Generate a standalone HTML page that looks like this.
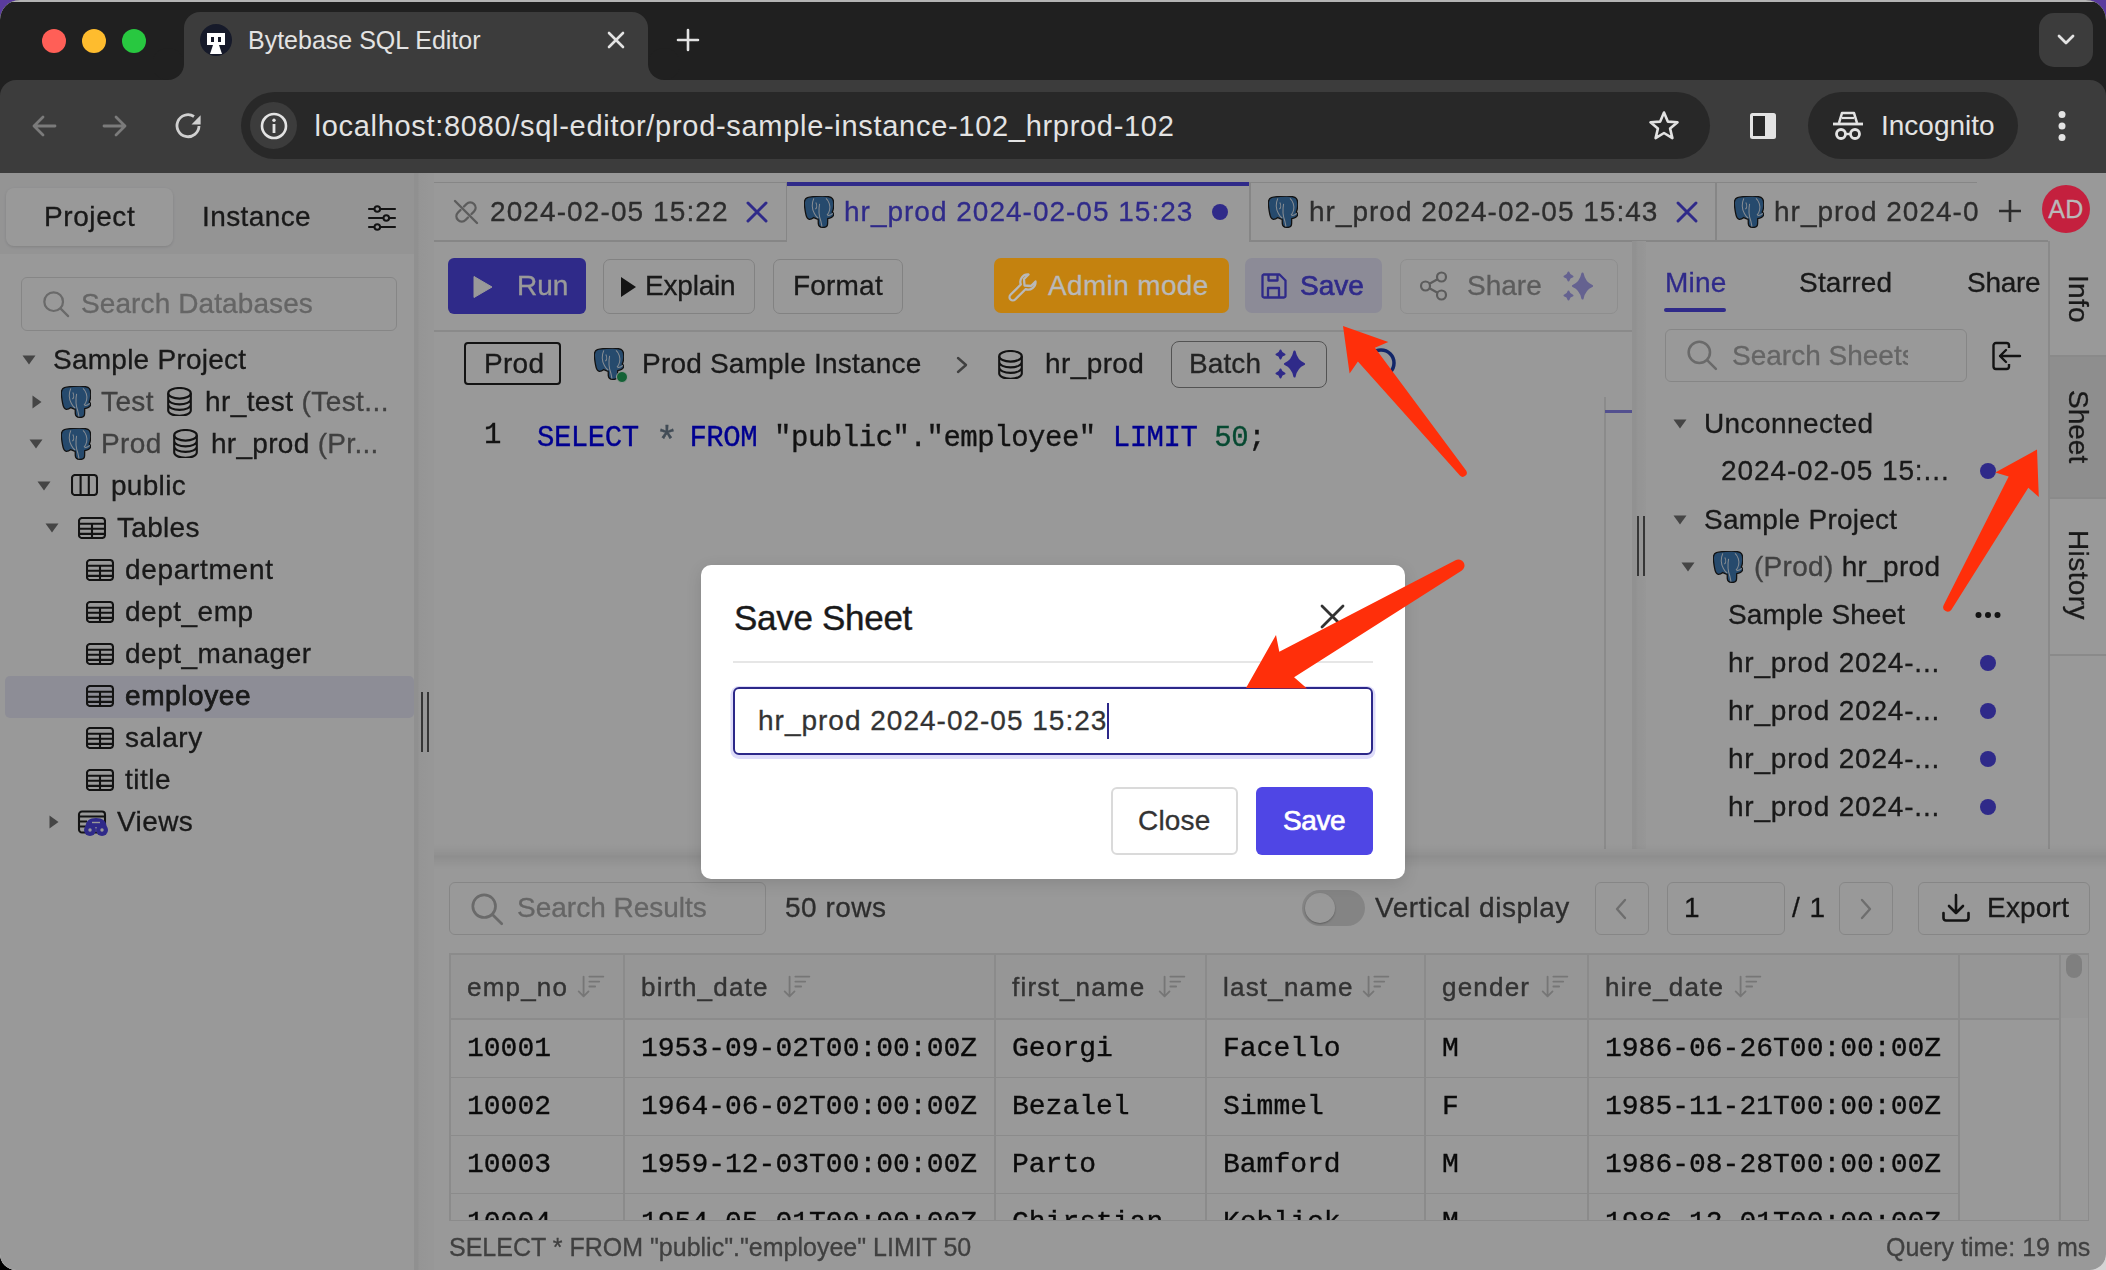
<!DOCTYPE html>
<html><head><meta charset="utf-8">
<style>
html,body{margin:0;padding:0}
body{width:2106px;height:1270px;overflow:hidden;position:relative;background:#000;font-family:"Liberation Sans",sans-serif}
.a{position:absolute}
.t{position:absolute;white-space:nowrap;line-height:28px;font-size:28px;color:#2a2a2a;-webkit-text-stroke:0.3px}
.m{font-family:"Liberation Mono",monospace;-webkit-text-stroke:0.35px currentColor}
svg{position:absolute;overflow:visible}
</style></head><body>
<!-- outside corners -->
<div class="a" style="left:0;top:0;width:1053px;height:300px;background:#5a3b9e"></div>
<div class="a" style="left:1053px;top:0;width:1053px;height:300px;background:#5a3b9e"></div>
<div class="a" style="left:1053px;top:900px;width:1053px;height:370px;background:#d4d4d4"></div>
<div id="win" class="a" style="left:0;top:0;width:2106px;height:1270px;border-radius:20px 20px 16px 16px;overflow:hidden;background:#fff">

<!-- ===== CHROME ===== -->
<div id="chrome">
<div class="a" style="left:0;top:0;width:2106px;height:173px;background:#202020"></div>
<div class="a" style="left:0;top:80px;width:2106px;height:93px;background:#3c3c3c;border-radius:16px 16px 0 0"></div>
<!-- active tab -->
<div class="a" style="left:184px;top:12px;width:464px;height:70px;background:#3c3c3c;border-radius:16px 16px 0 0"></div>
<div class="a" style="left:168px;top:64px;width:16px;height:16px;background:#3c3c3c"></div>
<div class="a" style="left:152px;top:48px;width:32px;height:32px;background:#202020;border-radius:50%"></div>
<div class="a" style="left:648px;top:64px;width:16px;height:16px;background:#3c3c3c"></div>
<div class="a" style="left:648px;top:48px;width:32px;height:32px;background:#202020;border-radius:50%"></div>
<!-- traffic lights -->
<div class="a" style="left:42px;top:29px;width:24px;height:24px;border-radius:50%;background:#ff5f57"></div>
<div class="a" style="left:82px;top:29px;width:24px;height:24px;border-radius:50%;background:#febc2e"></div>
<div class="a" style="left:122px;top:29px;width:24px;height:24px;border-radius:50%;background:#28c840"></div>
<!-- favicon -->
<div class="a" style="left:200px;top:24px;width:32px;height:32px;border-radius:50%;background:#161a2a"></div>
<svg style="left:200px;top:24px" width="32" height="32" viewBox="0 0 32 32">
<path d="M7 9h18v12h-6l3 9h-12l3-9h-6z" fill="#fff"/>
<rect x="11" y="13" width="3" height="5" fill="#161a2a"/><rect x="18" y="13" width="3" height="5" fill="#161a2a"/>
</svg>
<div class="t" style="left:248px;top:26px;font-size:25px;color:#e3e3e3;-webkit-text-stroke:0">Bytebase SQL Editor</div>
<svg style="left:606px;top:30px" width="20" height="20" viewBox="0 0 20 20"><path d="M3 3L17 17M17 3L3 17" stroke="#e3e3e3" stroke-width="2.6" stroke-linecap="round"/></svg>
<svg style="left:676px;top:28px" width="24" height="24" viewBox="0 0 24 24"><path d="M12 2V22M2 12H22" stroke="#e3e3e3" stroke-width="2.6" stroke-linecap="round"/></svg>
<!-- dropdown -->
<div class="a" style="left:2039px;top:13px;width:54px;height:54px;border-radius:15px;background:#3c3c3c"></div>
<svg style="left:2056px;top:32px" width="20" height="14" viewBox="0 0 20 14"><path d="M3 4L10 11L17 4" stroke="#e3e3e3" stroke-width="2.8" fill="none" stroke-linecap="round" stroke-linejoin="round"/></svg>
<!-- nav -->
<svg style="left:30px;top:112px" width="28" height="28" viewBox="0 0 28 28"><path d="M25 14H4M13 5L4 14L13 23" stroke="#7b7b7b" stroke-width="2.8" fill="none" stroke-linecap="round" stroke-linejoin="round"/></svg>
<svg style="left:101px;top:112px" width="28" height="28" viewBox="0 0 28 28"><path d="M3 14H24M15 5L24 14L15 23" stroke="#7b7b7b" stroke-width="2.8" fill="none" stroke-linecap="round" stroke-linejoin="round"/></svg>
<svg style="left:174px;top:112px" width="28" height="28" viewBox="0 0 28 28"><path d="M20 4.5A11 11 0 1 0 25 14" stroke="#d0d0d0" stroke-width="2.8" fill="none"/><path d="M17.5 12.6H26.6V3.2Z" fill="#d0d0d0"/></svg>
<!-- url bar -->
<div class="a" style="left:241px;top:92px;width:1469px;height:67px;border-radius:34px;background:#282828"></div>
<div class="a" style="left:250px;top:102px;width:47px;height:47px;border-radius:50%;background:#3c3c3c"></div>
<svg style="left:259px;top:111px" width="30" height="30" viewBox="0 0 30 30"><circle cx="15" cy="15" r="12" stroke="#e3e3e3" stroke-width="2.6" fill="none"/><rect x="13.6" y="13" width="2.8" height="9" fill="#e3e3e3"/><circle cx="15" cy="9.2" r="1.7" fill="#e3e3e3"/></svg>
<div class="t" style="left:314.5px;top:111px;font-size:29px;line-height:30px;color:#e3e3e3;letter-spacing:0.7px;-webkit-text-stroke:0">localhost:8080/sql-editor/prod-sample-instance-102_hrprod-102</div>
<svg style="left:1647px;top:109px" width="34" height="34" viewBox="0 0 34 34"><path d="M17 3.5L20.8 12.6L30.5 13.3L23.1 19.6L25.4 29.1L17 24L8.6 29.1L10.9 19.6L3.5 13.3L13.2 12.6Z" stroke="#e3e3e3" stroke-width="2.6" fill="none" stroke-linejoin="round"/></svg>
<svg style="left:1748px;top:111px" width="30" height="30" viewBox="0 0 30 30"><rect x="2" y="2" width="26" height="26" rx="2.5" fill="#e3e3e3"/><rect x="5" y="5" width="12" height="20" fill="#282828"/></svg>
<!-- incognito -->
<div class="a" style="left:1808px;top:92px;width:210px;height:67px;border-radius:34px;background:#282828"></div>
<svg style="left:1831px;top:109px" width="34" height="34" viewBox="0 0 34 34"><path d="M8 14L11 4H23L26 14" fill="none" stroke="#e3e3e3" stroke-width="2.6" stroke-linejoin="round"/><path d="M11 9H23" stroke="#e3e3e3" stroke-width="2.2"/><path d="M2 15H32" stroke="#e3e3e3" stroke-width="2.8"/><circle cx="10" cy="25" r="4.5" fill="none" stroke="#e3e3e3" stroke-width="2.8"/><circle cx="24" cy="25" r="4.5" fill="none" stroke="#e3e3e3" stroke-width="2.8"/><path d="M14.5 25H19.5" stroke="#e3e3e3" stroke-width="2.4"/></svg>
<div class="t" style="left:1881px;top:112px;color:#e3e3e3;-webkit-text-stroke:0">Incognito</div>
<svg style="left:2052px;top:108px" width="20" height="36" viewBox="0 0 20 36"><circle cx="10" cy="6.5" r="3.5" fill="#e3e3e3"/><circle cx="10" cy="18" r="3.5" fill="#e3e3e3"/><circle cx="10" cy="29.5" r="3.5" fill="#e3e3e3"/></svg>
<div class="a" style="left:0;top:0;width:2106px;height:1.5px;background:#b4b4b4"></div>
</div>

<!-- ===== APP ===== -->
<div id="app" class="a" style="left:0;top:0;width:2106px;height:1270px;filter:brightness(0.6)">
<div class="a" style="left:0;top:173px;width:2106px;height:1097px;background:#fff"></div>
<svg width="0" height="0" style="position:absolute">
<defs>
<symbol id="pg" viewBox="0 0 30 32"><path d="M3.4 1.6C7 0.4 18 0 21.7 0.3C25 0.5 27.4 1.2 28.4 2.6C29.8 4.5 30 8.5 29.4 12.3C29.1 14 28.6 15.4 28.2 16.1C29.4 17 30 18 29.6 19.1C29 20.6 26.8 22.2 23.7 22.7L23.6 27.8C23.5 30.2 21.8 31.4 19.5 31.4C16.5 31.4 14.5 30.2 14.3 27.6L14.2 23.4C12.6 22.7 11 22 9.8 21.6C8.5 22.6 6.8 23.4 5.2 23.3C3.6 23.1 2.2 21 1.5 16.7C0.8 12.5 0.1 8 0.4 5.8C0.7 3.8 1.8 2.2 3.4 1.6Z" fill="#3f7bb5" stroke="#1e1e1e" stroke-width="1.3"/><path d="M9.8 2.4C7.8 7 7.9 13 10.4 17.5C11.4 19.5 12.6 21 14.2 22M22 2.4C25 5 26.6 10 25.6 14C25.1 16.4 24.1 18 23 19M15.6 7.8C14.6 13 15 20 16.8 25L18 30.6M11.8 6.5C13.2 9 12.8 12 11.4 13.2M23.6 19.6C25.6 19.6 27.6 18.6 28.8 17.4" fill="none" stroke="#dfe8f2" stroke-width="1.05"/></symbol>
<symbol id="db" viewBox="0 0 25 29"><ellipse cx="12.5" cy="6.3" rx="11.3" ry="5.3" fill="none" stroke="currentColor" stroke-width="2.1"/><path d="M1.2 6.3V23.5C1.2 26.4 6.3 28.8 12.5 28.8S23.8 26.4 23.8 23.5V6.3M1.2 12.1C1.2 15 6.3 17.4 12.5 17.4S23.8 15 23.8 12.1M1.2 17.6C1.2 20.5 6.3 22.9 12.5 22.9S23.8 20.5 23.8 17.6" fill="none" stroke="currentColor" stroke-width="2.1"/></symbol>
<symbol id="tbl" viewBox="0 0 28 22"><rect x="1" y="1" width="26" height="20" rx="3" fill="none" stroke="currentColor" stroke-width="2.1"/><path d="M1 6.7H27M1 11.8H27M1 16.9H27M14 6.7V21" stroke="currentColor" stroke-width="2.1"/></symbol>
<symbol id="sch" viewBox="0 0 27 22"><rect x="1" y="1" width="25" height="20" rx="3" fill="none" stroke="currentColor" stroke-width="2.1"/><path d="M9.6 1V21M17.8 1V21" stroke="currentColor" stroke-width="2.1"/></symbol>
<symbol id="tri" viewBox="0 0 14 10"><path d="M0.5 0.5H13.5L7 9.5Z" fill="currentColor"/></symbol>
<symbol id="trr" viewBox="0 0 10 14"><path d="M0.5 0.5V13.5L9.5 7Z" fill="currentColor"/></symbol>
<symbol id="spark" viewBox="0 0 32 32"><g fill="currentColor" stroke="currentColor" stroke-linejoin="round"><path d="M20.5 3.5C21.8 10 24 13.5 30 16C24 18.5 21.8 22 20.5 28.5C19.2 22 17 18.5 11 16C17 13.5 19.2 10 20.5 3.5Z" stroke-width="2.2"/><path d="M6.5 2.5C7 5 8 6 10.5 6.5C8 7 7 8 6.5 10.5C6 8 5 7 2.5 6.5C5 6 6 5 6.5 2.5Z" stroke-width="2"/><path d="M6.5 21.5C7 24 8 25 10.5 25.5C8 26 7 27 6.5 29.5C6 27 5 26 2.5 25.5C5 25 6 24 6.5 21.5Z" stroke-width="2"/></g></symbol>
<symbol id="srch" viewBox="0 0 30 30"><circle cx="12.5" cy="12.5" r="10" fill="none" stroke="currentColor" stroke-width="2.4"/><path d="M20 20L28 28" stroke="currentColor" stroke-width="2.4" stroke-linecap="round"/></symbol>
<symbol id="sort" viewBox="0 0 34 30"><path d="M8 3V27M2 21L8 27L14 21" fill="none" stroke="currentColor" stroke-width="2.2" stroke-linecap="round" stroke-linejoin="round"/><path d="M15 3H32M15 9H27M15 15H22" stroke="currentColor" stroke-width="2.2" stroke-linecap="round"/></symbol>
</defs></svg>

<!-- ===== SIDEBAR ===== -->
<div class="a" style="left:0;top:173px;width:414px;height:1097px;background:#fff"></div>
<div class="a" style="left:0;top:173px;width:414px;height:81px;background:#f6f6f7"></div>
<div class="a" style="left:6px;top:188px;width:167px;height:58px;border-radius:8px;background:#fff;box-shadow:0 1px 3px rgba(0,0,0,.12)"></div>
<div class="t" style="left:44px;top:203px;letter-spacing:0.6px">Project</div>
<div class="t" style="left:202px;top:203px;letter-spacing:0.4px">Instance</div>
<svg style="left:366px;top:203px" width="30" height="30" viewBox="0 0 30 30"><path d="M3 6H29M3 15H29M3 24H29" stroke="#1f1f1f" stroke-width="2.1" stroke-linecap="round"/><circle cx="11.3" cy="6" r="2.8" fill="#f6f6f7" stroke="#1f1f1f" stroke-width="2"/><circle cx="20.3" cy="15" r="2.8" fill="#f6f6f7" stroke="#1f1f1f" stroke-width="2"/><circle cx="11.3" cy="24" r="2.8" fill="#f6f6f7" stroke="#1f1f1f" stroke-width="2"/></svg>
<div class="a" style="left:21px;top:277px;width:374px;height:52px;border:1.5px solid #e0e0e0;border-radius:6px"></div>
<svg style="left:42px;top:290px;color:#b0b0b0" width="28" height="28"><use href="#srch"/></svg>
<div class="t" style="left:81px;top:290px;color:#a8a8a8;letter-spacing:0.1px">Search Databases</div>
<!-- tree -->
<svg style="left:22px;top:355px;color:#737373" width="14" height="10"><use href="#tri"/></svg>
<div class="t" style="left:53px;top:346px;letter-spacing:0.25px">Sample Project</div>
<svg style="left:32px;top:395px;color:#737373" width="10" height="14"><use href="#trr"/></svg>
<svg style="left:61px;top:386px" width="30" height="32"><use href="#pg"/></svg>
<div class="t" style="left:101px;top:388px;color:#6b6b6b;letter-spacing:0.4px">Test</div>
<svg style="left:167px;top:387px;color:#1f1f1f" width="25" height="29"><use href="#db"/></svg>
<div class="t" style="left:205px;top:388px;letter-spacing:0.4px">hr_test <span style="color:#6b6b6b">(Test...</span></div>
<svg style="left:29px;top:439px;color:#737373" width="14" height="10"><use href="#tri"/></svg>
<svg style="left:61px;top:428px" width="30" height="32"><use href="#pg"/></svg>
<div class="t" style="left:101px;top:430px;color:#6b6b6b;letter-spacing:0.4px">Prod</div>
<svg style="left:173px;top:429px;color:#1f1f1f" width="25" height="29"><use href="#db"/></svg>
<div class="t" style="left:211px;top:430px;letter-spacing:0.3px">hr_prod <span style="color:#6b6b6b">(Pr...</span></div>
<svg style="left:37px;top:481px;color:#737373" width="14" height="10"><use href="#tri"/></svg>
<svg style="left:71px;top:474px;color:#1f1f1f" width="27" height="22"><use href="#sch"/></svg>
<div class="t" style="left:111px;top:472px;letter-spacing:0.3px">public</div>
<svg style="left:45px;top:523px;color:#737373" width="14" height="10"><use href="#tri"/></svg>
<svg style="left:78px;top:517px;color:#1f1f1f" width="28" height="22"><use href="#tbl"/></svg>
<div class="t" style="left:117px;top:514px;letter-spacing:0.3px">Tables</div>
<div class="a" style="left:5px;top:676px;width:409px;height:42px;border-radius:5px;background:#ebebfa"></div>
<svg style="left:86px;top:559px;color:#1f1f1f" width="28" height="22"><use href="#tbl"/></svg>
<div class="t" style="left:125px;top:556px;letter-spacing:0.7px">department</div>
<svg style="left:86px;top:601px;color:#1f1f1f" width="28" height="22"><use href="#tbl"/></svg>
<div class="t" style="left:125px;top:598px;letter-spacing:0.5px">dept_emp</div>
<svg style="left:86px;top:643px;color:#1f1f1f" width="28" height="22"><use href="#tbl"/></svg>
<div class="t" style="left:125px;top:640px;letter-spacing:0.5px">dept_manager</div>
<svg style="left:86px;top:685px;color:#1f1f1f" width="28" height="22"><use href="#tbl"/></svg>
<div class="t" style="left:125px;top:682px;letter-spacing:0.6px;-webkit-text-stroke:0.75px">employee</div>
<svg style="left:86px;top:727px;color:#1f1f1f" width="28" height="22"><use href="#tbl"/></svg>
<div class="t" style="left:125px;top:724px;letter-spacing:0.5px">salary</div>
<svg style="left:86px;top:769px;color:#1f1f1f" width="28" height="22"><use href="#tbl"/></svg>
<div class="t" style="left:125px;top:766px;letter-spacing:0.5px">title</div>
<svg style="left:49px;top:815px;color:#737373" width="10" height="14"><use href="#trr"/></svg>
<svg style="left:77px;top:810px" width="32" height="28" viewBox="0 0 32 28"><rect x="2" y="1.5" width="26" height="21" rx="3" fill="none" stroke="#1f1f1f" stroke-width="2.1"/><path d="M2 6.5H28M2 11.5H10M2 16.5H10" stroke="#1f1f1f" stroke-width="2"/><path d="M8.5 17C8.5 11 12.5 8 19 8C25.5 8 29.5 11 29.5 17Z" fill="#4f46e5"/><circle cx="13" cy="20" r="6" fill="#4f46e5"/><circle cx="25" cy="20" r="6" fill="#4f46e5"/><circle cx="13" cy="20" r="1.7" fill="#fff"/><circle cx="25" cy="20" r="1.7" fill="#fff"/><path d="M15 12.5H23" stroke="#fff" stroke-width="1.4"/></svg>

<div class="t" style="left:117px;top:808px;letter-spacing:0.4px">Views</div>
<!-- splitter -->
<div class="a" style="left:414px;top:173px;width:20px;height:1097px;background:linear-gradient(to right,#f0f0f0 0,#f0f0f0 4px,#f9f9f9 5px,#fcfcfc 20px)"></div>
<div class="a" style="left:421px;top:692px;width:2px;height:60px;background:#5a5a5a"></div>
<div class="a" style="left:427px;top:692px;width:2px;height:60px;background:#5a5a5a"></div>

<!-- ===== MAIN TABS ===== -->
<div class="a" style="left:434px;top:182px;width:1543px;height:1px;background:#e0e0e0"></div>
<div class="a" style="left:434px;top:240px;width:1614px;height:1.5px;background:#e0e0e0"></div>
<div class="a" style="left:786px;top:183px;width:1.5px;height:58px;background:#e0e0e0"></div>
<div class="a" style="left:1249px;top:183px;width:1.5px;height:58px;background:#e0e0e0"></div>
<div class="a" style="left:1715px;top:183px;width:1.5px;height:58px;background:#e0e0e0"></div>
<!-- tab1 -->
<svg style="left:451px;top:197px" width="30" height="30" viewBox="0 0 30 30"><path d="M13 9.5L15.5 7A5.3 5.3 0 0 1 23 14.5L20.5 17M17 20.5L14.5 23A5.3 5.3 0 0 1 7 15.5L9.5 13" fill="none" stroke="#9a9a9a" stroke-width="2.4" stroke-linecap="round"/><path d="M4 4L26 26" stroke="#9a9a9a" stroke-width="2.4" stroke-linecap="round"/></svg>
<div class="t" style="left:490px;top:198px;color:#4b4b4b;letter-spacing:1.1px">2024-02-05 15:22</div>
<svg style="left:746px;top:201px" width="22" height="22" viewBox="0 0 22 22"><path d="M2 2L20 20M20 2L2 20" stroke="#4f46e5" stroke-width="3" stroke-linecap="round"/></svg>
<!-- tab2 active -->
<div class="a" style="left:787px;top:182px;width:462px;height:60px;background:#fff"></div>
<div class="a" style="left:787px;top:182px;width:462px;height:3.5px;background:#4f46e5"></div>
<svg style="left:804px;top:196px" width="30" height="32"><use href="#pg"/></svg>
<div class="t" style="left:844px;top:198px;color:#4f46e5;letter-spacing:1px">hr_prod 2024-02-05 15:23</div>
<div class="a" style="left:1212px;top:204px;width:16px;height:16px;border-radius:50%;background:#4f46e5"></div>
<!-- tab3 -->
<svg style="left:1268px;top:196px" width="30" height="32"><use href="#pg"/></svg>
<div class="t" style="left:1309px;top:198px;color:#4b4b4b;letter-spacing:1px">hr_prod 2024-02-05 15:43</div>
<svg style="left:1676px;top:201px" width="22" height="22" viewBox="0 0 22 22"><path d="M2 2L20 20M20 2L2 20" stroke="#4f46e5" stroke-width="3" stroke-linecap="round"/></svg>
<!-- tab4 -->
<svg style="left:1734px;top:196px" width="30" height="32"><use href="#pg"/></svg>
<div class="a" style="left:1774px;top:190px;width:205px;height:44px;overflow:hidden"><div class="t" style="left:0;top:8px;color:#4b4b4b;letter-spacing:1px">hr_prod 2024-02-05 15:52</div></div>
<svg style="left:1998px;top:199px" width="24" height="24" viewBox="0 0 24 24"><path d="M12 1V23M1 12H23" stroke="#4b4b4b" stroke-width="2.6"/></svg>



<!-- ===== TOOLBAR ===== -->
<div class="a" style="left:448px;top:258px;width:138px;height:56px;border-radius:6px;background:#4f46e5"></div>
<svg style="left:472px;top:275px" width="22" height="24" viewBox="0 0 22 24"><path d="M2 1.5V22.5L20 12Z" fill="#fff" stroke="#fff" stroke-width="1" stroke-linejoin="round"/></svg>
<div class="t" style="left:517px;top:272px;color:#fff">Run</div>
<div class="a" style="left:603px;top:259px;width:150px;height:53px;border:1.5px solid #d8d8d8;border-radius:7px"></div>
<svg style="left:620px;top:276px" width="18" height="22" viewBox="0 0 18 22"><path d="M1 1V21L16 11Z" fill="#1f1f1f"/></svg>
<div class="t" style="left:645px;top:272px;letter-spacing:-0.2px">Explain</div>
<div class="a" style="left:773px;top:259px;width:128px;height:53px;border:1.5px solid #d8d8d8;border-radius:7px"></div>
<div class="t" style="left:793px;top:272px;letter-spacing:0.2px">Format</div>



<div class="a" style="left:1245px;top:258px;width:137px;height:55px;border-radius:7px;background:#e9e8fb"></div>
<svg style="left:1259px;top:271px" width="30" height="30" viewBox="0 0 30 30"><path d="M4.5 3.5H20.5L26.5 9.5V25A1.5 1.5 0 0 1 25 26.5H5A1.5 1.5 0 0 1 3.5 25V5A1.5 1.5 0 0 1 4.5 3.5Z" fill="none" stroke="#4f46e5" stroke-width="2.3" stroke-linejoin="round"/><path d="M9.5 3.5V9.5H18.5V3.5M9 26.5V17H20V26.5" fill="none" stroke="#4f46e5" stroke-width="2.3" stroke-linejoin="round"/></svg>
<div class="t" style="left:1300px;top:272px;color:#4f46e5;-webkit-text-stroke:0.7px #4f46e5;letter-spacing:0px">Save</div>
<div class="a" style="left:1400px;top:259px;width:216px;height:53px;border:1.5px solid #ececec;border-radius:7px"></div>
<svg style="left:1418px;top:270px" width="32" height="32" viewBox="0 0 32 32"><circle cx="23.5" cy="7" r="4.5" fill="none" stroke="#9a9a9a" stroke-width="2.2"/><circle cx="7.5" cy="16" r="4.5" fill="none" stroke="#9a9a9a" stroke-width="2.2"/><circle cx="23.5" cy="25" r="4.5" fill="none" stroke="#9a9a9a" stroke-width="2.2"/><path d="M11.5 13.8L19.5 9.2M11.5 18.2L19.5 22.8" stroke="#9a9a9a" stroke-width="2.2"/></svg>
<div class="t" style="left:1467px;top:272px;color:#9a9a9a">Share</div>
<svg style="left:1562px;top:270px;color:#a8a4f0" width="32" height="32"><use href="#spark"/></svg>
<div class="a" style="left:434px;top:330px;width:1198px;height:1.5px;background:#e6e6e6"></div>

<!-- ===== BREADCRUMB ===== -->
<div class="a" style="left:464px;top:342px;width:93px;height:39px;border:2px solid #1f1f1f;border-radius:4px"></div>
<div class="t" style="left:484px;top:350px;letter-spacing:0.3px">Prod</div>
<svg style="left:594px;top:348px" width="30" height="32"><use href="#pg"/></svg>
<div class="a" style="left:616px;top:371px;width:10px;height:10px;border-radius:50%;background:#22a35a;border:1.5px solid #fff"></div>
<div class="t" style="left:642px;top:350px;letter-spacing:0.2px">Prod Sample Instance</div>
<svg style="left:955px;top:356px" width="14" height="18" viewBox="0 0 14 18"><path d="M3 2L11 9L3 16" fill="none" stroke="#6b6b6b" stroke-width="2.4" stroke-linecap="round" stroke-linejoin="round"/></svg>
<svg style="left:998px;top:350px;color:#1f1f1f" width="25" height="29"><use href="#db"/></svg>
<div class="t" style="left:1045px;top:350px;letter-spacing:0.4px">hr_prod</div>
<div class="a" style="left:1171px;top:341px;width:154px;height:45px;border:1.5px solid #8a8a8a;border-radius:8px"></div>
<div class="t" style="left:1189px;top:350px;color:#3b3b3b;letter-spacing:0.1px">Batch</div>
<svg style="left:1274px;top:348px;color:#4f46e5" width="32" height="32"><use href="#spark"/></svg>
<svg style="left:1365px;top:347px" width="32" height="32" viewBox="0 0 32 32"><circle cx="16" cy="16" r="13" fill="none" stroke="#1e40af" stroke-width="3.5"/></svg>

<!-- ===== EDITOR ===== -->
<div class="t m" style="left:484px;top:422px;font-size:29px;color:#1f1f1f">1</div>
<div class="t m" style="left:537px;top:422px;font-size:29px;letter-spacing:-0.47px;color:#1f1f1f"><span style="color:#0000f0">SELECT</span> <span style="color:#6e7f90;display:inline-block;width:16.93px;font-size:38px;position:relative;top:7px;text-align:center">*</span> <span style="color:#0000f0">FROM</span> "public"."employee" <span style="color:#0000f0">LIMIT</span> <span style="color:#0b7a52">50</span>;</div>
<div class="a" style="left:1604px;top:397px;width:1.5px;height:452px;background:#e8e8e8"></div>
<div class="a" style="left:1605px;top:410px;width:27px;height:3px;background:#8b85ee"></div>
<div class="a" style="left:1632px;top:241px;width:14px;height:608px;background:linear-gradient(to right,#f2f2f2 0,#f2f2f2 4px,#f7f7f7 5px,#fbfbfb 14px)"></div>
<div class="a" style="left:1637px;top:516px;width:2px;height:60px;background:#5a5a5a"></div><div class="a" style="left:1643px;top:516px;width:2px;height:60px;background:#5a5a5a"></div>

<!-- ===== RIGHT PANEL ===== -->
<div class="t" style="left:1665px;top:269px;color:#4f46e5;letter-spacing:0.2px">Mine</div>
<div class="a" style="left:1664px;top:307.5px;width:62px;height:4px;border-radius:2px;background:#4f46e5"></div>
<div class="t" style="left:1799px;top:269px;letter-spacing:0.2px">Starred</div>
<div class="t" style="left:1967px;top:269px;letter-spacing:-0.3px">Share</div>
<div class="a" style="left:1665px;top:329px;width:300px;height:51px;border:1.5px solid #e0e0e0;border-radius:6px"></div>
<svg style="left:1686px;top:339px;color:#b0b0b0" width="32" height="32" viewBox="0 0 30 30"><use href="#srch"/></svg>
<div class="a" style="left:1732px;top:335px;width:176px;height:42px;overflow:hidden"><div class="t" style="left:0;top:7px;color:#a8a8a8">Search Sheets</div></div>
<svg style="left:1990px;top:340px" width="32" height="32" viewBox="0 0 32 32"><path d="M19 8V5.5A2.5 2.5 0 0 0 16.5 3H6A2.5 2.5 0 0 0 3.5 5.5V26.5A2.5 2.5 0 0 0 6 29H16.5A2.5 2.5 0 0 0 19 26.5V24" fill="none" stroke="#1f1f1f" stroke-width="2.4"/><path d="M30 16H10M16 10L10 16L16 22" fill="none" stroke="#1f1f1f" stroke-width="2.4" stroke-linecap="round" stroke-linejoin="round"/></svg>
<svg style="left:1673px;top:419px;color:#737373" width="14" height="10"><use href="#tri"/></svg>
<div class="t" style="left:1704px;top:410px;letter-spacing:0.4px">Unconnected</div>
<div class="t" style="left:1721px;top:457px;letter-spacing:0.9px">2024-02-05 15:...</div>
<div class="a" style="left:1980px;top:463px;width:16px;height:16px;border-radius:50%;background:#4f46e5"></div>
<svg style="left:1673px;top:515px;color:#737373" width="14" height="10"><use href="#tri"/></svg>
<div class="t" style="left:1704px;top:506px;letter-spacing:0.25px">Sample Project</div>
<svg style="left:1681px;top:562px;color:#737373" width="14" height="10"><use href="#tri"/></svg>
<svg style="left:1713px;top:551px" width="30" height="32"><use href="#pg"/></svg>
<div class="t" style="left:1754px;top:553px;letter-spacing:0.3px"><span style="color:#6b6b6b">(Prod)</span> hr_prod</div>
<div class="t" style="left:1728px;top:601px;letter-spacing:0.1px">Sample Sheet</div>
<svg style="left:1975px;top:610px" width="26" height="10" viewBox="0 0 26 10"><circle cx="3.5" cy="5" r="3" fill="#1f1f1f"/><circle cx="13" cy="5" r="3" fill="#1f1f1f"/><circle cx="22.5" cy="5" r="3" fill="#1f1f1f"/></svg>
<div class="t" style="left:1728px;top:649px;letter-spacing:0.8px">hr_prod 2024-...</div>
<div class="a" style="left:1980px;top:655px;width:16px;height:16px;border-radius:50%;background:#4f46e5"></div>
<div class="t" style="left:1728px;top:697px;letter-spacing:0.8px">hr_prod 2024-...</div>
<div class="a" style="left:1980px;top:703px;width:16px;height:16px;border-radius:50%;background:#4f46e5"></div>
<div class="t" style="left:1728px;top:745px;letter-spacing:0.8px">hr_prod 2024-...</div>
<div class="a" style="left:1980px;top:751px;width:16px;height:16px;border-radius:50%;background:#4f46e5"></div>
<div class="t" style="left:1728px;top:793px;letter-spacing:0.8px">hr_prod 2024-...</div>
<div class="a" style="left:1980px;top:799px;width:16px;height:16px;border-radius:50%;background:#4f46e5"></div>
<!-- vertical tabs -->
<div class="a" style="left:2048px;top:241px;width:1.5px;height:608px;background:#e6e6e6"></div>
<div class="a" style="left:2049.5px;top:355px;width:57px;height:142px;background:#ededed"></div>
<div class="a" style="left:2049.5px;top:355px;width:57px;height:1.5px;background:#e6e6e6"></div>
<div class="a" style="left:2049.5px;top:497px;width:57px;height:1.5px;background:#e6e6e6"></div>
<div class="a" style="left:2049.5px;top:654px;width:57px;height:1.5px;background:#e6e6e6"></div>
<div class="t" style="left:2063px;top:284px;transform:rotate(90deg);transform-origin:0 0;left:2092px;top:275px;letter-spacing:0.3px">Info</div>
<div class="t" style="transform:rotate(90deg);transform-origin:0 0;left:2092px;top:390px;letter-spacing:0px">Sheet</div>
<div class="t" style="transform:rotate(90deg);transform-origin:0 0;left:2092px;top:530px;letter-spacing:0.4px">History</div>

<!-- ===== RESULTS ===== -->
<div class="a" style="left:434px;top:844px;width:1672px;height:25px;background:linear-gradient(to bottom,rgba(0,0,0,0) 0,rgba(0,0,0,.035) 30%,rgba(0,0,0,.07) 50%,rgba(0,0,0,.035) 75%,rgba(0,0,0,0) 100%)"></div>
<div class="a" style="left:449px;top:882px;width:317px;height:53px;border:1.5px solid #e0e0e0;border-radius:6px;box-sizing:border-box"></div>
<svg style="left:470px;top:892px;color:#b0b0b0" width="34" height="34" viewBox="0 0 30 30"><use href="#srch"/></svg>
<div class="t" style="left:517px;top:894px;color:#a8a8a8">Search Results</div>
<div class="t" style="left:785px;top:894px;color:#4b4b4b;letter-spacing:0.5px">50 rows</div>
<div class="a" style="left:1302px;top:890px;width:63px;height:36px;border-radius:18px;background:#dcdcdc"></div>
<div class="a" style="left:1305px;top:893px;width:30px;height:30px;border-radius:50%;background:#fff;box-shadow:0 1px 2px rgba(0,0,0,.3)"></div>
<div class="t" style="left:1375px;top:894px;color:#4b4b4b;letter-spacing:0.5px">Vertical display</div>
<div class="a" style="left:1595px;top:882px;width:54px;height:53px;border:1.5px solid #e0e0e0;border-radius:6px;box-sizing:border-box"></div>
<svg style="left:1612px;top:898px" width="18" height="22" viewBox="0 0 18 22"><path d="M13 2L5 11L13 20" fill="none" stroke="#b8b8b8" stroke-width="2.4" stroke-linecap="round" stroke-linejoin="round"/></svg>
<div class="a" style="left:1667px;top:882px;width:118px;height:53px;border:1.5px solid #e0e0e0;border-radius:6px;box-sizing:border-box"></div>
<div class="t" style="left:1684px;top:894px;color:#1f1f1f">1</div>
<div class="t" style="left:1792px;top:894px;color:#1f1f1f;letter-spacing:1px">/ 1</div>
<div class="a" style="left:1839px;top:882px;width:54px;height:53px;border:1.5px solid #e0e0e0;border-radius:6px;box-sizing:border-box"></div>
<svg style="left:1857px;top:898px" width="18" height="22" viewBox="0 0 18 22"><path d="M5 2L13 11L5 20" fill="none" stroke="#b8b8b8" stroke-width="2.4" stroke-linecap="round" stroke-linejoin="round"/></svg>
<div class="a" style="left:1918px;top:882px;width:172px;height:53px;border:1.5px solid #e0e0e0;border-radius:6px;box-sizing:border-box"></div>
<svg style="left:1940px;top:892px" width="32" height="32" viewBox="0 0 32 32"><path d="M16 3V21M9 14L16 21L23 14" fill="none" stroke="#1f1f1f" stroke-width="2.6" stroke-linecap="round" stroke-linejoin="round"/><path d="M3.5 21V26A2.5 2.5 0 0 0 6 28.5H26A2.5 2.5 0 0 0 28.5 26V21" fill="none" stroke="#1f1f1f" stroke-width="2.6" stroke-linecap="round"/></svg>
<div class="t" style="left:1987px;top:894px;letter-spacing:0.2px">Export</div>
<div class="a" style="left:449px;top:953px;width:1640px;height:268px;overflow:hidden">
<div class="a" style="left:0;top:0;width:1640px;height:65px;background:#fafafa"></div>
<div class="a" style="left:0;top:0;width:1640px;height:1.5px;background:#e8e8e8"></div>
<div class="a" style="left:0;top:65px;width:1610px;height:1.5px;background:#e8e8e8"></div>
<div class="a" style="left:0;top:123.5px;width:1509px;height:1.5px;background:#e8e8e8"></div>
<div class="a" style="left:0;top:181.5px;width:1509px;height:1.5px;background:#e8e8e8"></div>
<div class="a" style="left:0;top:239.5px;width:1509px;height:1.5px;background:#e8e8e8"></div>
<div class="a" style="left:0px;top:0;width:1.5px;height:268px;background:#e8e8e8"></div>
<div class="a" style="left:174px;top:0;width:1.5px;height:268px;background:#e8e8e8"></div>
<div class="a" style="left:545px;top:0;width:1.5px;height:268px;background:#e8e8e8"></div>
<div class="a" style="left:756px;top:0;width:1.5px;height:268px;background:#e8e8e8"></div>
<div class="a" style="left:975px;top:0;width:1.5px;height:268px;background:#e8e8e8"></div>
<div class="a" style="left:1138px;top:0;width:1.5px;height:268px;background:#e8e8e8"></div>
<div class="a" style="left:1509px;top:0;width:1.5px;height:268px;background:#e8e8e8"></div>
<div class="a" style="left:1610px;top:0;width:1.5px;height:268px;background:#e8e8e8"></div>
<div class="a" style="left:1638.5px;top:0;width:1.5px;height:268px;background:#e8e8e8"></div>
<div class="t" style="left:18px;top:20px;font-size:26px;line-height:28px;color:#555;letter-spacing:0.6px;-webkit-text-stroke:0.4px #555;letter-spacing:1.2px">emp_no</div>
<svg style="left:128px;top:21px;color:#c4c4c4" width="28" height="25" viewBox="0 0 34 30"><use href="#sort"/></svg>
<div class="t" style="left:192px;top:20px;font-size:26px;line-height:28px;color:#555;letter-spacing:0.6px;-webkit-text-stroke:0.4px #555;letter-spacing:1.2px">birth_date</div>
<svg style="left:334px;top:21px;color:#c4c4c4" width="28" height="25" viewBox="0 0 34 30"><use href="#sort"/></svg>
<div class="t" style="left:563px;top:20px;font-size:26px;line-height:28px;color:#555;letter-spacing:0.6px;-webkit-text-stroke:0.4px #555;letter-spacing:1.2px">first_name</div>
<svg style="left:709px;top:21px;color:#c4c4c4" width="28" height="25" viewBox="0 0 34 30"><use href="#sort"/></svg>
<div class="t" style="left:774px;top:20px;font-size:26px;line-height:28px;color:#555;letter-spacing:0.6px;-webkit-text-stroke:0.4px #555;letter-spacing:1.2px">last_name</div>
<svg style="left:913px;top:21px;color:#c4c4c4" width="28" height="25" viewBox="0 0 34 30"><use href="#sort"/></svg>
<div class="t" style="left:993px;top:20px;font-size:26px;line-height:28px;color:#555;letter-spacing:0.6px;-webkit-text-stroke:0.4px #555;letter-spacing:1.2px">gender</div>
<svg style="left:1092px;top:21px;color:#c4c4c4" width="28" height="25" viewBox="0 0 34 30"><use href="#sort"/></svg>
<div class="t" style="left:1156px;top:20px;font-size:26px;line-height:28px;color:#555;letter-spacing:0.6px;-webkit-text-stroke:0.4px #555;letter-spacing:1.2px">hire_date</div>
<svg style="left:1285px;top:21px;color:#c4c4c4" width="28" height="25" viewBox="0 0 34 30"><use href="#sort"/></svg>
<div class="t m" style="left:18px;top:82px;color:#111">10001</div>
<div class="t m" style="left:192px;top:82px;color:#111">1953-09-02T00:00:00Z</div>
<div class="t m" style="left:563px;top:82px;color:#111">Georgi</div>
<div class="t m" style="left:774px;top:82px;color:#111">Facello</div>
<div class="t m" style="left:993px;top:82px;color:#111">M</div>
<div class="t m" style="left:1156px;top:82px;color:#111">1986-06-26T00:00:00Z</div>
<div class="t m" style="left:18px;top:140px;color:#111">10002</div>
<div class="t m" style="left:192px;top:140px;color:#111">1964-06-02T00:00:00Z</div>
<div class="t m" style="left:563px;top:140px;color:#111">Bezalel</div>
<div class="t m" style="left:774px;top:140px;color:#111">Simmel</div>
<div class="t m" style="left:993px;top:140px;color:#111">F</div>
<div class="t m" style="left:1156px;top:140px;color:#111">1985-11-21T00:00:00Z</div>
<div class="t m" style="left:18px;top:198px;color:#111">10003</div>
<div class="t m" style="left:192px;top:198px;color:#111">1959-12-03T00:00:00Z</div>
<div class="t m" style="left:563px;top:198px;color:#111">Parto</div>
<div class="t m" style="left:774px;top:198px;color:#111">Bamford</div>
<div class="t m" style="left:993px;top:198px;color:#111">M</div>
<div class="t m" style="left:1156px;top:198px;color:#111">1986-08-28T00:00:00Z</div>
<div class="t m" style="left:18px;top:256px;color:#111">10004</div>
<div class="t m" style="left:192px;top:256px;color:#111">1954-05-01T00:00:00Z</div>
<div class="t m" style="left:563px;top:256px;color:#111">Chirstian</div>
<div class="t m" style="left:774px;top:256px;color:#111">Koblick</div>
<div class="t m" style="left:993px;top:256px;color:#111">M</div>
<div class="t m" style="left:1156px;top:256px;color:#111">1986-12-01T00:00:00Z</div>
<div class="a" style="left:1617px;top:1px;width:15.5px;height:24px;border-radius:8px;background:#d4d4d4"></div>
</div>
<div class="a" style="left:434px;top:1221px;width:1672px;height:49px;background:#fff"></div>
<div class="a" style="left:449px;top:1219.5px;width:1640px;height:1.5px;background:#e8e8e8"></div>
<div class="t" style="left:449px;top:1233px;font-size:25px;color:#6a6a6a;letter-spacing:0px">SELECT * FROM "public"."employee" LIMIT 50</div>
<div class="t" style="left:1886px;top:1233px;font-size:25px;color:#6a6a6a;letter-spacing:0px">Query time: 19 ms</div>


</div>

<!-- overlay -->


<!-- saturated elements above dim -->
<div class="a" style="left:994px;top:258px;width:235px;height:55px;border-radius:7px;background:#c4820f"></div>
<svg style="left:1006px;top:270px" width="34" height="34" viewBox="0 0 34 34"><path d="M22.5 4.5A7.5 7.5 0 0 0 14.8 14.5L4.5 24.8A3.2 3.2 0 0 0 9.2 29.5L19.5 19.2A7.5 7.5 0 0 0 29.5 11.5L25 16L18.5 15.5L18 9L22.5 4.5Z" fill="none" stroke="#b9b9b9" stroke-width="2.3" stroke-linejoin="round"/></svg>
<div class="t" style="left:1048px;top:272px;color:#b9b9b9;letter-spacing:0.35px">Admin mode</div>
<div class="a" style="left:2042px;top:185px;width:48px;height:48px;border-radius:50%;background:#c4203e"></div>
<div class="t" style="left:2042px;top:195px;width:48px;text-align:center;color:#b9b9b9;font-size:25px;letter-spacing:0.5px">AD</div>
<!-- ===== MODAL ===== -->
<div class="a" style="left:701px;top:565px;width:704px;height:314px;border-radius:10px;background:#fff;box-shadow:0 4px 16px rgba(0,0,0,.12)"></div>
<div class="t" style="left:734px;top:600px;font-size:35px;line-height:35px;color:#1a1a1a;letter-spacing:-0.3px;-webkit-text-stroke:0.4px #1a1a1a">Save Sheet</div>
<svg style="left:1319px;top:603px" width="27" height="27" viewBox="0 0 27 27"><path d="M3 3L24 24M24 3L3 24" stroke="#333" stroke-width="2.8" stroke-linecap="round"/></svg>
<div class="a" style="left:733px;top:661px;width:640px;height:2px;background:#e6e6e6"></div>
<div class="a" style="left:733px;top:687px;width:640px;height:68px;border:2px solid #2c2889;border-radius:6px;box-sizing:border-box;box-shadow:0 1.5px 0 2.5px #dedcfa"></div>
<div class="t" style="left:758px;top:707px;color:#333;letter-spacing:1px">hr_prod 2024-02-05 15:23</div>
<div class="a" style="left:1107px;top:703px;width:2px;height:36px;background:#2c2889"></div>
<div class="a" style="left:1111px;top:787px;width:127px;height:68px;border:2px solid #dadada;border-radius:6px;box-sizing:border-box"></div>
<div class="t" style="left:1138px;top:807px;color:#333;letter-spacing:0.2px">Close</div>
<div class="a" style="left:1256px;top:787px;width:117px;height:68px;border-radius:6px;background:#4f46e5"></div>
<div class="t" style="left:1283px;top:807px;color:#fff;letter-spacing:-0.4px;-webkit-text-stroke:0.7px #fff">Save</div>


<svg style="left:0;top:0" width="2106" height="1270" viewBox="0 0 2106 1270"><path d="M1343.0 326.0 L1388.3 342.0 L1374.9 347.7 L1466.1 470.5 A4 4 0 0 1 1459.9 475.5 L1357.9 361.6 L1349.6 373.6 Z" fill="#ff2f0a"/><path d="M2037.0 449.5 L2038.8 497.1 L2028.3 487.7 L1951.4 609.7 A4.5 4.5 0 0 1 1943.6 605.3 L2008.7 476.6 L1995.3 472.4 Z" fill="#ff2f0a"/><path d="M1246.0 688.0 L1276.0 634.9 L1279.3 651.7 L1455.5 560.3 A6 6 0 0 1 1461.5 570.7 L1294.1 677.3 L1307.0 688.6 Z" fill="#ff2f0a"/></svg>


</div>
</body></html>
